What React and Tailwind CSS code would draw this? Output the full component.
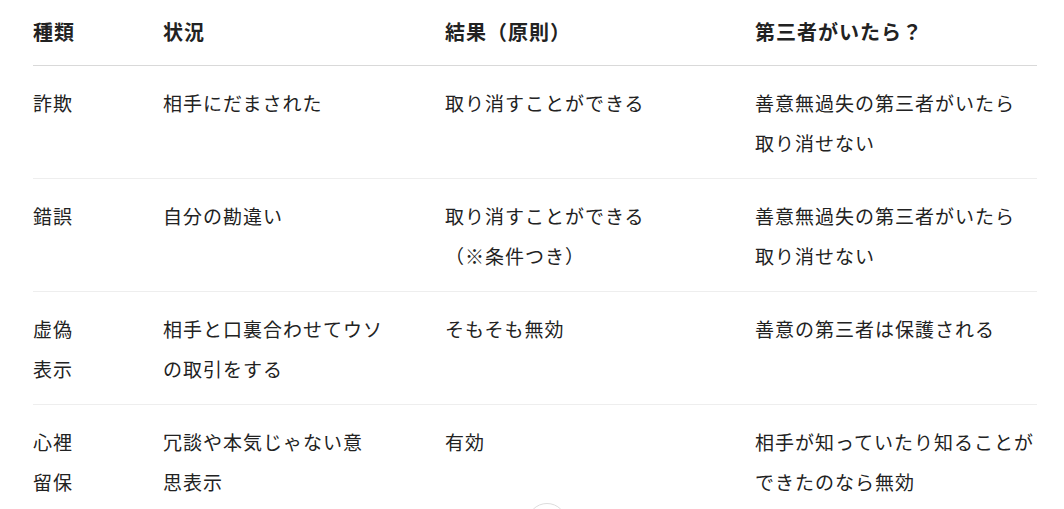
import React from "react";

const rows = [
  {
    kind: ["詐欺"],
    situation: ["相手にだまされた"],
    result: ["取り消すことができる"],
    third: ["善意無過失の第三者がいたら", "取り消せない"],
  },
  {
    kind: ["錯誤"],
    situation: ["自分の勘違い"],
    result: ["取り消すことができる", "（※条件つき）"],
    third: ["善意無過失の第三者がいたら", "取り消せない"],
  },
  {
    kind: ["虚偽", "表示"],
    situation: ["相手と口裏合わせてウソ", "の取引をする"],
    result: ["そもそも無効"],
    third: ["善意の第三者は保護される"],
  },
  {
    kind: ["心裡", "留保"],
    situation: ["冗談や本気じゃない意", "思表示"],
    result: ["有効"],
    third: ["相手が知っていたり知ることが", "できたのなら無効"],
  },
];

function Lines({ lines }) {
  return (
    <div className="whitespace-nowrap">
      {lines.map((l, i) => (
        <div key={i}>{l}</div>
      ))}
    </div>
  );
}

export default function App() {
  return (
    <div
      className="relative h-[509px] w-full overflow-hidden bg-white px-[33px] text-[#222]"
      style={{ fontFamily: '"Noto Sans CJK JP", "Noto Sans", sans-serif' }}
    >
      <div className="w-[1004px] text-[19px] leading-[40px] tracking-[1px]">
        <div className="grid grid-cols-[130px_282px_310px_1fr] border-b border-[#d9d9d9] pt-[12px] pb-[13px] text-[20px] font-bold">
          <div>種類</div>
          <div>状況</div>
          <div>結果（原則）</div>
          <div>第三者がいたら？</div>
        </div>
        {rows.map((r, i) => (
          <div
            key={i}
            className="grid grid-cols-[130px_282px_310px_1fr] border-b border-[#eeeeee] pt-[17px] pb-[15px]"
          >
            <Lines lines={r.kind} />
            <Lines lines={r.situation} />
            <Lines lines={r.result} />
            <div className="min-h-[80px]">
              <Lines lines={r.third} />
            </div>
          </div>
        ))}
      </div>
      <div className="absolute left-[527px] top-[503px] h-[40px] w-[40px] rounded-full border border-[#dddddd] bg-white" />
    </div>
  );
}
